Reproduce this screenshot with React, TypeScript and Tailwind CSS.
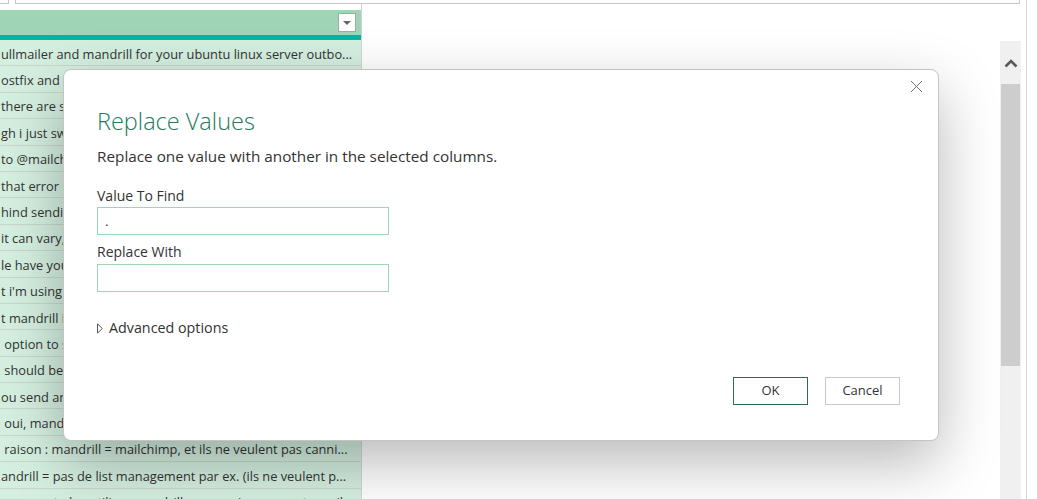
import { X } from "lucide-react";

const rows = [
  "ullmailer and mandrill for your ubuntu linux server outbo...",
  "ostfix and forward all mail through mandrill smtp relay...",
  "there are some settings you need to change in main.cf...",
  "gh i just switched to mandrill and it works great so fa...",
  "to @mailchimp: is there a way to whitelist an ip addr...",
  "that error means the api key is not valid, please che...",
  "hind sending through mandrill are the dkim records o...",
  "it can vary, depending on the recipient server and t...",
  "le have you tried using the mandrill webhook for bou...",
  "t i'm using mandrill with postfix and everything is fi...",
  "t mandrill is the best transactional email service i h...",
  " option to send through mandrill is available in the s...",
  " should be fixed now, the outage lasted about 20 min...",
  "ou send an email with mandrill the headers include x...",
  " oui, mandrill est payant maintenant depuis le chang...",
  " raison : mandrill = mailchimp, et ils ne veulent pas canni...",
  "andrill = pas de list management par ex. (ils ne veulent p...",
  "n ne peut plus utiliser mandrill sans avoir un compte mail...",
];

export default function App() {
  return (
    <div
      className="relative w-[1037px] h-[499px] overflow-hidden bg-white text-[#333]"
      style={{ fontFamily: '"Open Sans", "Noto Sans", sans-serif' }}
    >
      {/* formula bar edge */}
      <div className="flex h-[4px]">
        <div className="w-[9px] border-r border-b border-[#c6c6c6]" />
        <div className="ml-[6px] w-[1005px] border-l border-r border-b border-[#c6c6c6]" />
      </div>

      <div className="flex h-[495px]">
        {/* data column */}
        <div className="w-[362px] flex flex-col pt-[6px] border-r border-[#d4d4d4] overflow-hidden">
          <div className="h-[25px] shrink-0 bg-[#9fd5b6] flex items-center justify-end pr-[5px]">
            <div className="w-[18px] h-[19px] bg-white border border-[#a6a6a6] flex items-center justify-center">
              <div className="w-0 h-0 border-l-[4px] border-r-[4px] border-t-[4px] border-l-transparent border-r-transparent border-t-[#666]" />
            </div>
          </div>
          <div className="h-[5px] shrink-0 bg-[#00b6a1]" />
          {rows.map((r, i) => (
            <div
              key={i}
              className="h-[26.4px] shrink-0 flex items-center pt-[3px] bg-[#d4efe0] border-b border-[#c9d6cf] text-[12.8px]"
            >
              <span className="block w-[358px] pl-[1px] whitespace-pre overflow-hidden">{r}</span>
            </div>
          ))}
        </div>

        <div className="flex-1" />

        {/* vertical scrollbar */}
        <div className="w-[21px] mt-[37px] bg-[#f0f0f0] flex flex-col">
          <div className="h-[43px] flex items-center justify-center">
            <svg width="14" height="10" viewBox="0 0 14 10">
              <path d="M1.5 8.5 L7 3 L12.5 8.5" fill="none" stroke="#5a5a5a" strokeWidth="2.6" />
            </svg>
          </div>
          <div className="h-[282px] mx-[1px] bg-[#cdcdcd]" />
        </div>
        <div className="w-[5px]" />
        <div className="w-[1px] bg-[#d4d4d4] -mt-[4px]" />
        <div className="w-[10px]" />
      </div>

      {/* dialog */}
      <div className="absolute left-[63px] top-[69px] w-[876px] h-[372px] bg-white rounded-[8px] border border-[#c4c4c4] shadow-[0_22px_60px_rgba(0,0,0,0.28)]">
        <button className="absolute right-[11px] top-[6px] text-[#6b6b6b]">
          <X size={21} strokeWidth={1.1} />
        </button>
        <div className="pl-[33px] pt-[35px] flex flex-col">
          <div className="text-[23.5px] font-light leading-[32px] text-[#217a5a]">Replace Values</div>
          <div className="mt-[8px] text-[15.3px] leading-[22px]">
            Replace one value with another in the selected columns.
          </div>
          <div className="mt-[20px] text-[14px] leading-[18px]">Value To Find</div>
          <div className="mt-[2px] w-[292px] h-[28px] border-[1.5px] border-[#9fd5b7] flex items-center pl-[7px] text-[13.5px]">
            .
          </div>
          <div className="mt-[8px] text-[14px] leading-[18px]">Replace With</div>
          <div className="mt-[3px] w-[292px] h-[28px] border-[1.5px] border-[#9fd5b7]" />
          <div className="mt-[26px] flex items-center gap-[6px] text-[14.3px] leading-[20px]">
            <svg width="6" height="11" viewBox="0 0 6 11">
              <path d="M0.5 0.8 L5.2 5.5 L0.5 10.2 Z" fill="none" stroke="#555" strokeWidth="1" />
            </svg>
            <span>Advanced options</span>
          </div>
        </div>
        <div className="absolute right-[38px] top-[307px] flex gap-[17px] text-[13px]">
          <button className="w-[75px] h-[28px] border-[1.5px] border-[#2b6e4e] bg-white text-[#333]">OK</button>
          <button className="w-[75px] h-[28px] border-[1.5px] border-[#c8c8c8] bg-white text-[#333]">Cancel</button>
        </div>
      </div>
    </div>
  );
}
